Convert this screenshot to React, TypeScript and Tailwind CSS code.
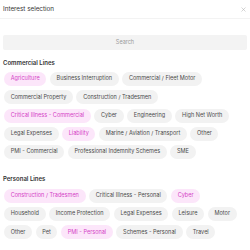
import React from "react";

type Chip = { label: string; on?: boolean };

const commercial: Chip[] = [
  { label: "Agriculture", on: true },
  { label: "Business Interruption" },
  { label: "Commercial / Fleet Motor" },
  { label: "Commercial Property" },
  { label: "Construction / Tradesmen" },
  { label: "Critical Illness - Commercial", on: true },
  { label: "Cyber" },
  { label: "Engineering" },
  { label: "High Net Worth" },
  { label: "Legal Expenses" },
  { label: "Liability", on: true },
  { label: "Marine / Aviation / Transport" },
  { label: "Other" },
  { label: "PMI - Commercial" },
  { label: "Professional Indemnity Schemes" },
  { label: "SME" },
];

const personal: Chip[] = [
  { label: "Construction / Tradesmen", on: true },
  { label: "Critical Illness - Personal" },
  { label: "Cyber", on: true },
  { label: "Household" },
  { label: "Income Protection" },
  { label: "Legal Expenses" },
  { label: "Leisure" },
  { label: "Motor" },
  { label: "Other" },
  { label: "Pet" },
  { label: "PMI - Personal", on: true },
  { label: "Schemes - Personal" },
  { label: "Travel" },
];

function Chips({ items }: { items: Chip[] }) {
  return (
    <div className="flex flex-wrap gap-x-[3.5px] gap-y-[4.3px] pl-[4px] pr-[12px]">
      {items.map((c, i) => (
        <span
          key={i}
          className={
            c.on
              ? "flex h-[14px] items-center whitespace-nowrap rounded-full bg-[#fce6fa] px-[6.7px] text-[5.55px] leading-none text-[#d43fc6]"
              : "flex h-[14px] items-center whitespace-nowrap rounded-full bg-[#f2f2f2] px-[6.7px] text-[5.55px] leading-none text-[#4a4a4a]"
          }
        >
          {c.label}
        </span>
      ))}
    </div>
  );
}

export default function App() {
  return (
    <div
      className="h-[250px] w-[250px] overflow-hidden bg-white"
      style={{ fontFamily: "Inter, 'Noto Sans', sans-serif" }}
    >
      <div className="flex h-[19px] items-center justify-between border-b border-[#f3f3f3] pl-[3px] pr-[4px]">
        <span className="text-[6.3px] leading-none text-[#333]">Interest selection</span>
        <svg width="5" height="5" viewBox="0 0 10 10" className="text-[#aaa]">
          <path d="M1 1L9 9M9 1L1 9" stroke="currentColor" strokeWidth="1" />
        </svg>
      </div>
      <div className="px-[3px] pt-[16px]">
        <div className="flex h-[15px] items-center justify-center rounded-[2px] bg-[#f3f3f3] text-[5.5px] text-[#9a9a9a]">
          Search
        </div>
      </div>
      <div className="mt-[8.5px] px-[3px] text-[6px] font-semibold leading-[8px] text-[#333]">
        Commercial Lines
      </div>
      <div className="mt-[5.5px]">
        <Chips items={commercial} />
      </div>
      <div className="mt-[16px] px-[3px] text-[6px] font-semibold leading-[8px] text-[#333]">
        Personal Lines
      </div>
      <div className="mt-[5.5px]">
        <Chips items={personal} />
      </div>
    </div>
  );
}
